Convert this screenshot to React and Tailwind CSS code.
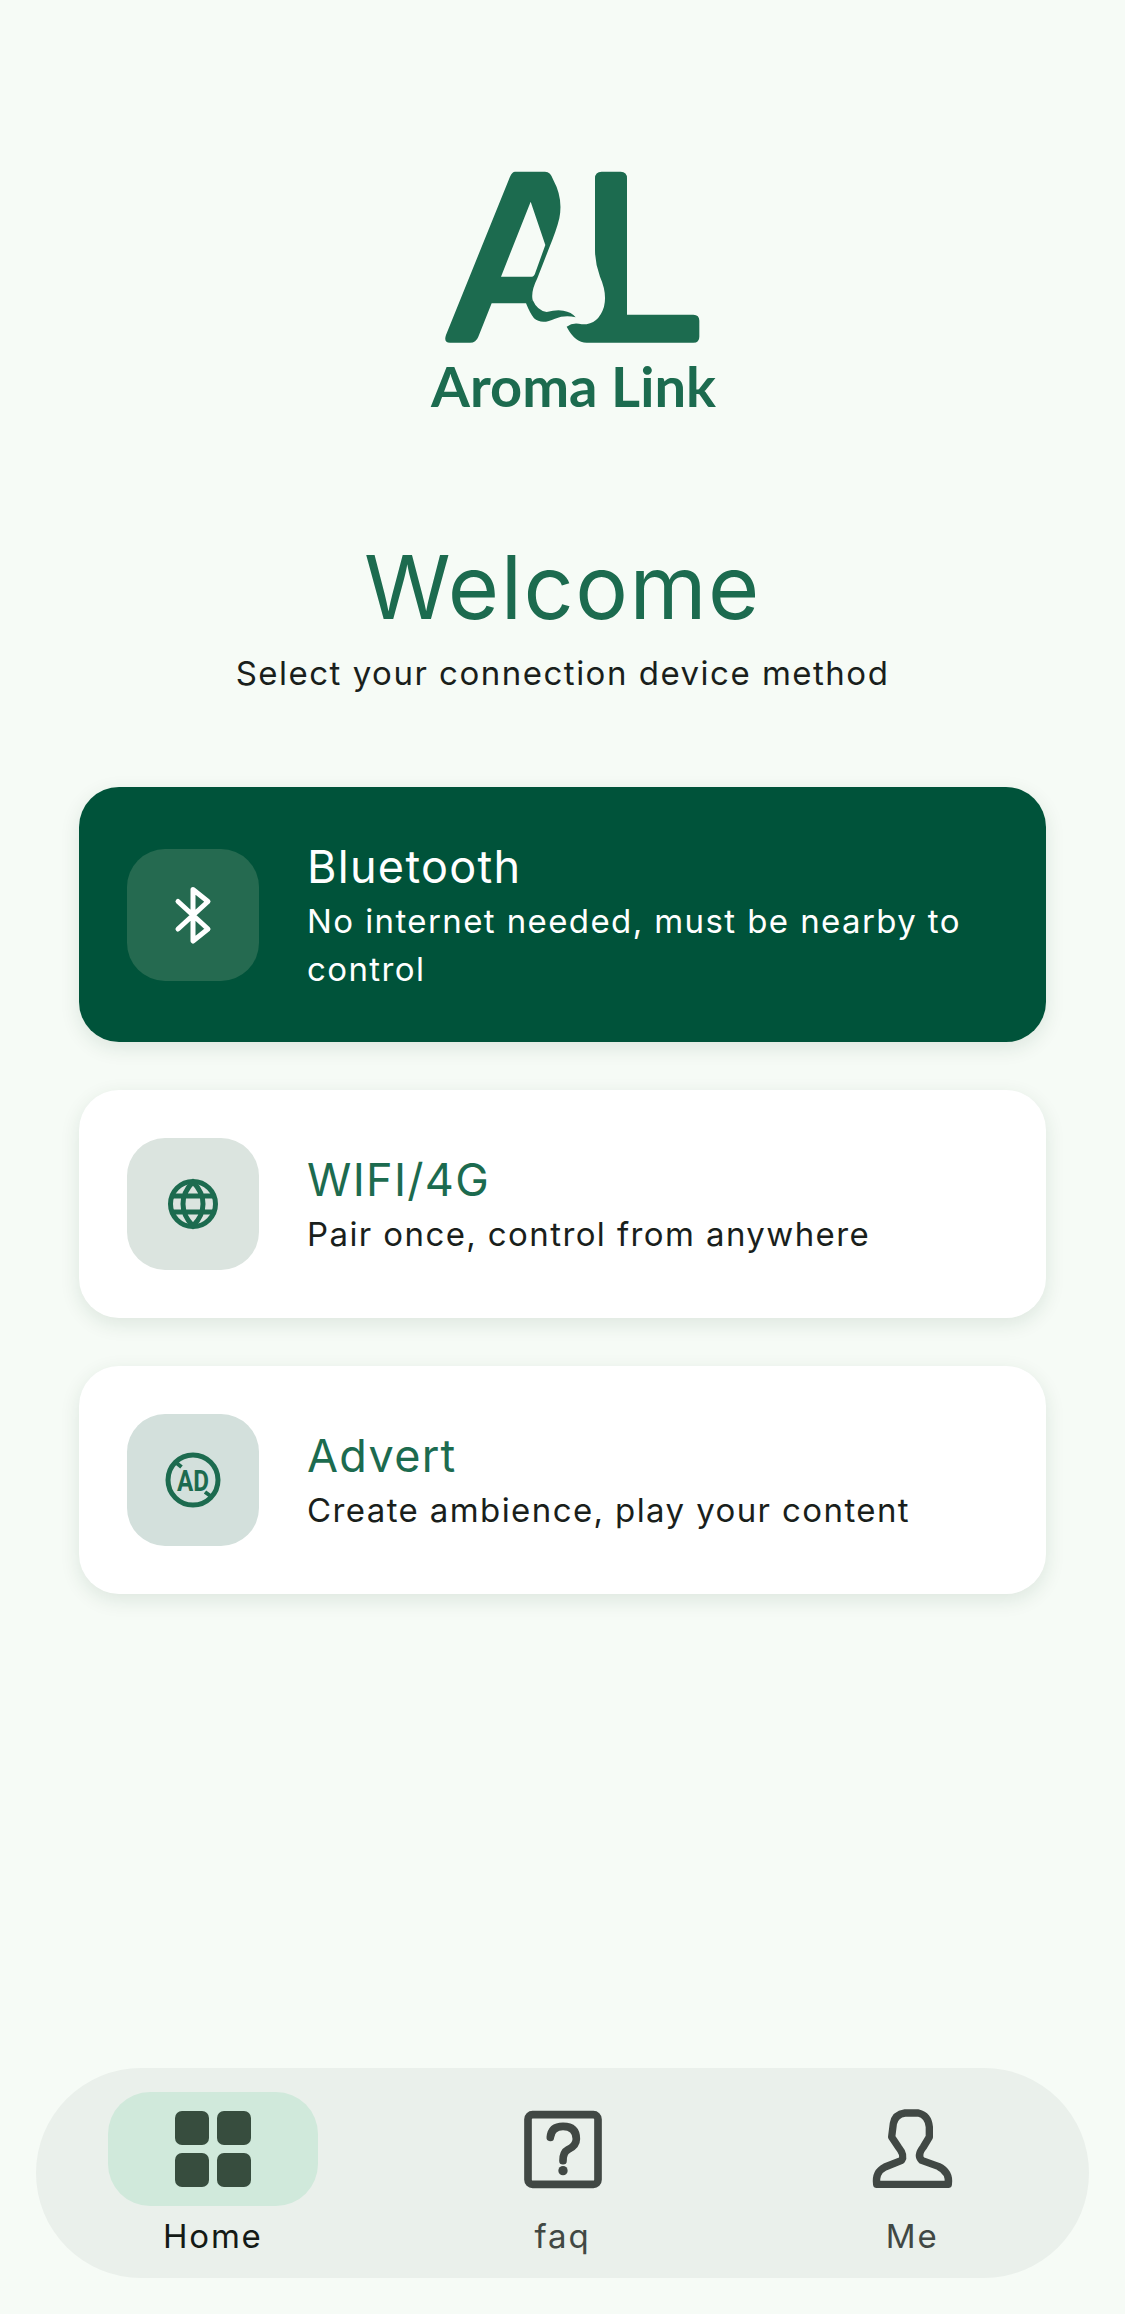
const sans = "font-['Inter',sans-serif]"

function LogoMark() {
  return (
    <svg width="340" height="200" viewBox="0 0 1020 600" className="ml-[400px] block" fill="#1c6b4f">
      <path fillRule="evenodd" d="M345 65 H435 Q452 65 460 90 Q490 145 478 205 Q470 240 445 300 L412 385 Q392 425 398 450 L385 460 L275 460 L235 560 Q228 578 210 578 H150 Q130 578 138 555 L330 80 Q337 65 345 65 Z M392 155 L303 380 H395 Q403 380 407 365 L436 285 Z" />
      <path d="M378 460 L398 450 Q412 482 440 486 Q470 478 490 482 Q515 486 527 502 Q495 494 465 506 Q425 525 402 505 Q390 490 378 460 Z" />
      <path d="M585 85 Q585 65 605 65 H662 Q681 65 681 85 V494 H880 Q898 494 898 512 V560 Q898 578 880 578 H560 Q525 578 500 530 Q520 515 545 523 Q595 525 612 470 Q622 430 600 380 Q585 340 585 300 Z" />
    </svg>
  )
}

function BluetoothIcon() {
  return (
    <svg width="40" height="62" viewBox="0 0 40 62" fill="none" stroke="#fff" strokeWidth="5" strokeLinecap="round" strokeLinejoin="round">
      <path d="M5 17.500 L35 45 L20 57 V5.500 L35 17.500 L5 45" />
    </svg>
  )
}

function GlobeIcon() {
  return (
    <svg width="54" height="54" viewBox="0 0 54 54" fill="none" stroke="#1c6b4f" strokeWidth="5">
      <circle cx="27" cy="27" r="22.500" />
      <path d="M5 19 H49 M5 35 H49 M27 5 Q17 15 17 27 Q17 39 27 49 Q37 39 37 27 Q37 15 27 5 Z" />
    </svg>
  )
}

function AdIcon() {
  return (
    <svg width="60" height="60" viewBox="0 0 60 60" fill="none" stroke="#1c6b4f" strokeWidth="5">
      <circle cx="30" cy="30" r="25" />
      <path d="M13.500 13 L18.500 17 M42 42 L47.500 46" strokeWidth="4" />
      <text x="14" y="41" textLength="32" lengthAdjust="spacingAndGlyphs" fill="#1c6b4f" stroke="none" fontSize="30" fontWeight="700" fontFamily="Roboto, sans-serif">AD</text>
    </svg>
  )
}

function HomeIcon() {
  return (
    <div className="grid grid-cols-2 gap-[8px]">
      <div className="h-[34px] w-[34px] rounded-[7px] bg-[#374d3e]" />
      <div className="h-[34px] w-[34px] rounded-[7px] bg-[#374d3e]" />
      <div className="h-[34px] w-[34px] rounded-[7px] bg-[#374d3e]" />
      <div className="h-[34px] w-[34px] rounded-[7px] bg-[#374d3e]" />
    </div>
  )
}

function FaqIcon() {
  return (
    <svg width="100" height="95" viewBox="-5 -1 300 285" fill="none" stroke="#414844" strokeWidth="23" strokeLinecap="round">
      <rect x="40" y="37" width="210" height="209" rx="14" />
      <path d="M107 105 Q110 72 145 72 Q185 72 185 110 Q185 130 160 142 Q145 150 145 175" />
      <circle cx="145" cy="205" r="14" fill="#414844" stroke="none" />
    </svg>
  )
}

function MeIcon() {
  return (
    <svg width="105" height="95" viewBox="0 5 315 285" fill="none" stroke="#414844" strokeWidth="22" strokeLinejoin="round">
      <path d="M50 252 Q45 215 75 200 L125 180 Q135 165 115 140 L95 110 L100 70 Q105 42 135 38 H175 Q205 45 208 80 V110 L190 140 Q170 165 185 180 L235 198 Q270 215 265 252 Z" />
    </svg>
  )
}

function MethodCard({ icon, title, desc, active, tile }) {
  return (
    <div className={`flex items-center gap-[48px] rounded-[40px] px-[48px] shadow-[0_6px_20px_rgba(20,60,40,0.11)] ${active ? 'h-[255px] bg-[#00533a]' : 'h-[228px] bg-white'}`}>
      <div className={`flex h-[132px] w-[132px] shrink-0 items-center justify-center rounded-[38px] ${tile}`}>
        {icon}
      </div>
      <div className="min-w-0 flex-1">
        <div className={`text-[45px] leading-[60px] tracking-[1.300px] ${active ? 'text-white' : 'text-[#1c6b4f]'}`}>{title}</div>
        <div className={`text-[33px] leading-[48px] tracking-[1.400px] ${active ? 'text-white' : 'text-[#1a1f1c]'}`}>{desc}</div>
      </div>
    </div>
  )
}

function NavItem({ icon, label, active }) {
  return (
    <div className="flex flex-1 flex-col items-center">
      <div className={`flex h-[114px] w-[210px] items-center justify-center rounded-[42px] ${active ? 'bg-[#d0e9db]' : ''}`}>
        {icon}
      </div>
      <div className={`mt-[6px] text-[33px] leading-[48px] tracking-[1.800px] ${active ? 'text-[#141a16]' : 'text-[#414844]'}`}>{label}</div>
    </div>
  )
}

export default function App() {
  return (
    <div className={`${sans} flex h-[2314px] w-[1125px] flex-col bg-[#f6fbf6]`}>
      <div className="pt-[150px]">
        <LogoMark />
      </div>
      <div className="ml-[22px] text-center font-['Lato',sans-serif] text-[56px] leading-[72px] font-bold text-[#1c6b4f]">Aroma Link</div>
      <div className="mt-[111px] text-center text-[88px] leading-[108px] tracking-[1.500px] text-[#1c6b4f]">Welcome</div>
      <div className="mt-[8px] text-center text-[33px] leading-[48px] tracking-[1.500px] text-[#1a1f1c]">Select your connection device method</div>
      <div className="mt-[90px] flex flex-col gap-[48px] px-[79px]">
        <MethodCard active icon={<BluetoothIcon />} tile="bg-[#256a50]" title="Bluetooth" desc="No internet needed, must be nearby to control" />
        <MethodCard icon={<GlobeIcon />} tile="bg-[#dbe4df]" title="WIFI/4G" desc="Pair once, control from anywhere" />
        <MethodCard icon={<AdIcon />} tile="bg-[#d3e0dc]" title="Advert" desc="Create ambience, play your content" />
      </div>
      <div className="mx-[36px] mt-auto mb-[36px] flex h-[210px] rounded-[105px] bg-[#eaf0eb] px-[2px] pt-[24px]">
        <NavItem active icon={<HomeIcon />} label="Home" />
        <NavItem icon={<FaqIcon />} label="faq" />
        <NavItem icon={<MeIcon />} label="Me" />
      </div>
    </div>
  )
}
